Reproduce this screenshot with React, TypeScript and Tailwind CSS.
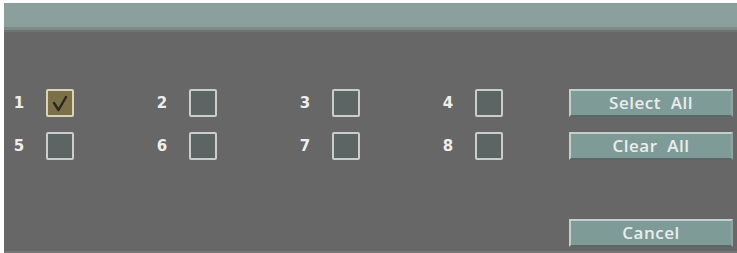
import React from 'react';

const channels = [1, 2, 3, 4, 5, 6, 7, 8];

const CheckBox: React.FC<{ checked?: boolean }> = ({ checked }) => (
  <div
    className={`w-[28px] h-[28px] rounded-[2px] border-2 flex items-center justify-center ${
      checked ? 'border-[#d9d3b8] bg-[#7c7049]' : 'border-[#c9cec9] bg-[#5c6563]'
    }`}
  >
    {checked && (
      <svg width="20" height="20" viewBox="0 0 20 20">
        <path d="M4 10 L8.5 17 L16 4" fill="none" stroke="#2c281c" strokeWidth="2.4" strokeLinecap="round" strokeLinejoin="round" />
      </svg>
    )}
  </div>
);

const OsdButton: React.FC<{ label: string }> = ({ label }) => (
  <button className="w-[164px] h-[28px] pb-[1px] bg-[#7f9b98] border-t-2 border-l-2 border-t-[#c3cfcc] border-l-[#c3cfcc] border-b-2 border-r-2 border-b-[#5b6766] border-r-[#8fa5a2] text-[#e9eeec] text-[17px] font-semibold font-['Open_Sans',sans-serif] tracking-[0.5px] whitespace-pre leading-none flex items-center justify-center">
    {label}
  </button>
);

export default function App() {
  return (
    <div className="w-[737px] h-[253px] bg-white pt-[3px] pl-[4px] flex flex-col font-['DejaVu_Sans',sans-serif] overflow-hidden">
      <div className="h-[24px] bg-[#8ba09c]" />
      <div className="h-[3px] bg-[#7e8c89]" />
      <div className="h-[2px] bg-[#6f7371]" />
      <div className="flex-1 bg-[#676767] flex border-b-2 border-b-[#767676]">
        <div className="pt-[57px] pl-[5px] grid grid-cols-[143px_143px_143px_100px] gap-y-[15px] content-start">
          {channels.map((n) => (
            <div key={n} className="flex items-center">
              <span className="w-[20px] text-center text-[#eeeeee] text-[15px] font-bold">{n}</span>
              <div className="ml-[17px]">
                <CheckBox checked={n === 1} />
              </div>
            </div>
          ))}
        </div>
        <div className="ml-auto mr-[4px] pt-[57px] pb-[4px] flex flex-col">
          <OsdButton label="Select  All" />
          <div className="mt-[15px]">
            <OsdButton label="Clear  All" />
          </div>
          <div className="mt-auto">
            <OsdButton label="Cancel" />
          </div>
        </div>
      </div>
    </div>
  );
}
